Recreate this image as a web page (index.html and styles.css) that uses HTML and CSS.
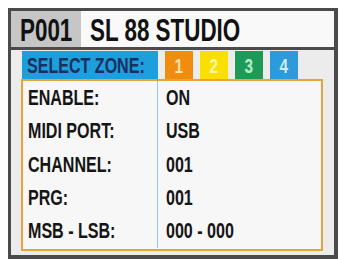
FILE: index.html
```html
<!DOCTYPE html>
<html>
<head>
<meta charset="utf-8">
<link rel="stylesheet" href="styles.css">
</head>
<body>
<div class="frame">
  <div class="header">
    <div class="prog"><span class="cond big">P001</span></div>
    <div class="name"><span class="cond big">SL 88 STUDIO</span></div>
  </div>
  <div class="zones">
    <div class="zone-label"><span class="cond">SELECT ZONE:</span></div>
    <div class="zone z1"><span class="cond c">1</span></div>
    <div class="zone z2"><span class="cond c">2</span></div>
    <div class="zone z3"><span class="cond c">3</span></div>
    <div class="zone z4"><span class="cond c">4</span></div>
  </div>
  <div class="table">
    <div class="row"><div class="key"><span class="cond">ENABLE:</span></div><div class="val"><span class="cond">ON</span></div></div>
    <div class="row"><div class="key"><span class="cond">MIDI PORT:</span></div><div class="val"><span class="cond">USB</span></div></div>
    <div class="row"><div class="key"><span class="cond">CHANNEL:</span></div><div class="val"><span class="cond">001</span></div></div>
    <div class="row"><div class="key"><span class="cond">PRG:</span></div><div class="val"><span class="cond">001</span></div></div>
    <div class="row"><div class="key"><span class="cond">MSB - LSB:</span></div><div class="val"><span class="cond">000 - 000</span></div></div>
  </div>
</div>
</body>
</html>
```
FILE: styles.css
```css
html, body {
  margin: 0;
  padding: 0;
  background: #ffffff;
}
body {
  padding: 8px 0 0 8px;
  font-family: "Liberation Sans", Arial, sans-serif;
  font-weight: bold;
}
.cond {
  display: inline-block;
  white-space: nowrap;
  transform: scaleX(0.73);
  transform-origin: left center;
}
.cond.big {
  transform: scaleX(0.7);
}
.cond.c {
  transform-origin: center center;
}
.frame {
  width: 323px;
  height: 244px;
  border: 3px solid #4b4b4b;
  border-right-width: 4px;
  border-bottom-width: 4px;
  background: #ececec;
  display: flex;
  flex-direction: column;
}
.header {
  display: flex;
  height: 36px;
  border-bottom: 3px solid #4b4b4b;
  overflow: hidden;
}
.prog {
  width: 70px;
  background: #c6c6c6;
  color: #111;
  font-size: 32px;
  line-height: 38px;
  padding-left: 9px;
  box-sizing: border-box;
  white-space: nowrap;
}
.name {
  flex: 1;
  background: #f9f9f9;
  color: #111;
  font-size: 32px;
  line-height: 38px;
  padding-left: 9px;
  white-space: nowrap;
}
.zones {
  display: flex;
  margin-top: 1px;
  margin-left: 11px;
  height: 28px;
  gap: 7px;
}
.zone-label {
  width: 136px;
  background: #1d9fdc;
  color: #17305e;
  font-size: 22px;
  line-height: 29px;
  padding-left: 5px;
  box-sizing: border-box;
  overflow: hidden;
}
.zone {
  width: 28px;
  font-size: 21px;
  line-height: 29px;
  text-align: center;
}
.z1 { background: #f08c10; color: #fbe2a8; }
.z2 { background: #f9e000; color: #fff6a8; }
.z3 { background: #1e9a58; color: #b6ecc8; }
.z4 { background: #2d9bd9; color: #d2ecfa; }
.table {
  margin-left: 10px;
  width: 302px;
  height: 172px;
  border: 2.5px solid #e8a43a;
  box-sizing: border-box;
  background: #f7f7f7;
  display: flex;
  flex-direction: column;
  padding: 0 0 1px 0;
}
.row {
  flex: 1;
  display: flex;
  align-items: center;
  color: #151515;
  font-size: 22px;
}
.key {
  width: 135px;
  height: 100%;
  display: flex;
  align-items: center;
  padding-left: 5px;
  box-sizing: border-box;
  border-right: 1px solid #8ccbe2;
  overflow: hidden;
}
.val {
  padding-left: 8px;
}
```
